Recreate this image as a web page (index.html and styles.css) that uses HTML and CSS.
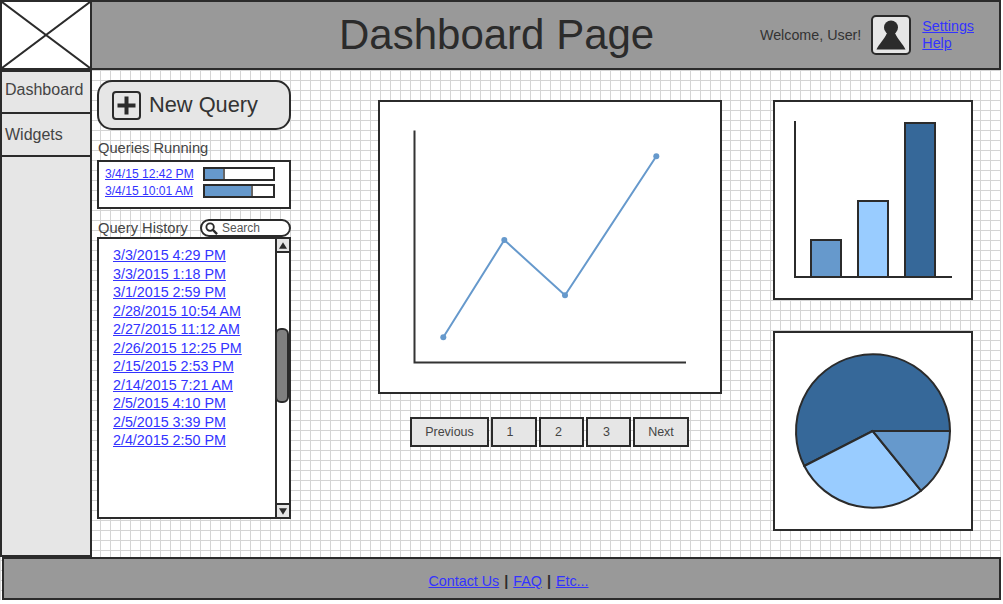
FILE: index.html
```html
<!DOCTYPE html>
<html lang="en">
<head>
    <meta charset="UTF-8">
    <title>Dashboard Page</title>
    <link rel="stylesheet" href="styles.css">
</head>
<body>
    <div class="page">
        <header class="top">
            <div class="logo">
                <svg width="88" height="66" viewBox="0 0 88 66">
                    <path d="M0 0L88 66M88 0L0 66" stroke="#2b2b2b" stroke-width="2" fill="none"/>
                </svg>
            </div>
            <h1 class="title">Dashboard Page</h1>
            <div class="user">
                <span class="welcome">Welcome, User!</span>
                <div class="avatar">
                    <svg width="36" height="36" viewBox="0 0 36 36">
                        <circle cx="18" cy="10.500" r="7" fill="#2b2b2b"/>
                        <path d="M3.500 32.500C6 27 11 23 14 16h8c3 7 8 11 10.500 16.500z" fill="#2b2b2b"/>
                    </svg>
                </div>
                <div class="user-links">
                    <a href="#">Settings</a>
                    <a href="#">Help</a>
                </div>
            </div>
        </header>

        <main class="content">
            <nav class="side">
                <a class="side-item side-first" href="#">Dashboard</a>
                <a class="side-item side-second" href="#">Widgets</a>
                <div class="side-rest"></div>
            </nav>

            <section class="queries">
                <button class="new-query">
                    <svg width="29" height="29" viewBox="0 0 29 29">
                        <rect x="1" y="1" width="27" height="27" rx="3" fill="none" stroke="#2b2b2b" stroke-width="2"/>
                        <path d="M14.500 5.500v18M5.500 14.500h18" stroke="#2b2b2b" stroke-width="4" fill="none"/>
                    </svg>
                    New Query
                </button>

                <h2 class="label running-label">Queries Running</h2>
                <div class="running">
                    <a href="#">3/4/15 12:42 PM</a>
                    <div class="bar"><div class="bar-fill" style="width: 30%"></div></div>
                    <a href="#">3/4/15 10:01 AM</a>
                    <div class="bar"><div class="bar-fill" style="width: 71%"></div></div>
                </div>

                <div class="history-head">
                    <h2 class="label">Query History</h2>
                    <div class="search">
                        <svg width="13" height="13" viewBox="0 0 14 14">
                            <circle cx="5.500" cy="5.500" r="4" fill="none" stroke="#2b2b2b" stroke-width="2"/>
                            <path d="M8.500 8.500L13 13" stroke="#2b2b2b" stroke-width="2.500"/>
                        </svg>
                        <span>Search</span>
                    </div>
                </div>
                <div class="history">
                    <ul class="history-list">
                        <li><a href="#">3/3/2015 4:29 PM</a></li>
                        <li><a href="#">3/3/2015 1:18 PM</a></li>
                        <li><a href="#">3/1/2015 2:59 PM</a></li>
                        <li><a href="#">2/28/2015 10:54 AM</a></li>
                        <li><a href="#">2/27/2015 11:12 AM</a></li>
                        <li><a href="#">2/26/2015 12:25 PM</a></li>
                        <li><a href="#">2/15/2015 2:53 PM</a></li>
                        <li><a href="#">2/14/2015 7:21 AM</a></li>
                        <li><a href="#">2/5/2015 4:10 PM</a></li>
                        <li><a href="#">2/5/2015 3:39 PM</a></li>
                        <li><a href="#">2/4/2015 2:50 PM</a></li>
                    </ul>
                    <div class="scroll">
                        <div class="scroll-btn scroll-up">
                            <svg width="8" height="7" viewBox="0 0 10 8"><path d="M5 0L10 8H0z" fill="#2b2b2b"/></svg>
                        </div>
                        <div class="scroll-thumb"></div>
                        <div class="scroll-btn scroll-down">
                            <svg width="8" height="7" viewBox="0 0 10 8"><path d="M0 0H10L5 8z" fill="#2b2b2b"/></svg>
                        </div>
                    </div>
                </div>
            </section>

            <section class="center">
                <div class="card line-card">
                    <svg width="340" height="290" viewBox="0 0 340 290">
                        <path d="M34.500 28.500V260.500H306" fill="none" stroke="#333" stroke-width="2"/>
                        <path d="M63.300 235.300L124.300 138L185 193.300L276.300 54.300" fill="none" stroke="#6699cc" stroke-width="2"/>
                        <circle cx="63.300" cy="235.300" r="3" fill="#6699cc"/>
                        <circle cx="124.300" cy="138" r="3" fill="#6699cc"/>
                        <circle cx="185" cy="193.300" r="3" fill="#6699cc"/>
                        <circle cx="276.300" cy="54.300" r="3" fill="#6699cc"/>
                    </svg>
                </div>
                <div class="pager">
                    <a class="page-btn prev" href="#">Previous</a>
                    <a class="page-btn one" href="#">1</a>
                    <a class="page-btn two" href="#">2</a>
                    <a class="page-btn three" href="#">3</a>
                    <a class="page-btn next" href="#">Next</a>
                </div>
            </section>

            <section class="right">
                <div class="card small-card">
                    <svg width="196" height="196" viewBox="0 0 196 196">
                        <path d="M20 19V175H177" fill="none" stroke="#2b2b2b" stroke-width="2"/>
                        <rect x="36" y="138" width="30" height="37" fill="#6699cc" stroke="#2b2b2b" stroke-width="2"/>
                        <rect x="83" y="99" width="30" height="76" fill="#99ccff" stroke="#2b2b2b" stroke-width="2"/>
                        <rect x="130" y="21" width="30" height="154" fill="#366899" stroke="#2b2b2b" stroke-width="2"/>
                    </svg>
                </div>
                <div class="card small-card pie-card">
                    <svg width="196" height="196" viewBox="0 0 196 196">
                        <path d="M97.700 98H175A77 77 0 1 0 29.300 133z" fill="#366899" stroke="#2b2b2b" stroke-width="2"/>
                        <path d="M97.700 98L29.300 133A77 77 0 0 0 146 157.700z" fill="#99ccff" stroke="#2b2b2b" stroke-width="2"/>
                        <path d="M97.700 98L146 157.700A77 77 0 0 0 175 98z" fill="#6699cc" stroke="#2b2b2b" stroke-width="2"/>
                    </svg>
                </div>
            </section>
        </main>

        <footer class="bottom">
            <a href="#">Contact Us</a>
            <span class="sep">|</span>
            <a href="#">FAQ</a>
            <span class="sep">|</span>
            <a href="#">Etc...</a>
        </footer>
    </div>
</body>
</html>
```

FILE: styles.css
```css
* {
    box-sizing: border-box;
}

body {
    margin: 0;
    background-color: #fff;
    font-family: "Liberation Sans", Arial, sans-serif;
    color: #333;
}

a {
    color: #3333ff;
}

svg {
    display: block;
}

.page {
    width: 1001px;
    height: 600px;
    display: flex;
    flex-direction: column;
    background-image:
        linear-gradient(#d4d4d4 1px, transparent 1px),
        linear-gradient(90deg, #d4d4d4 1px, transparent 1px);
    background-size: 10px 10px;
}

/* header */
.top {
    height: 70px;
    flex: none;
    display: flex;
    align-items: center;
    background-color: #999;
    border: 2px solid #2b2b2b;
    border-left: none;
}

.logo {
    width: 92px;
    height: 66px;
    background-color: #fff;
    border-left: 2px solid #2b2b2b;
    border-right: 2px solid #2b2b2b;
}

.title {
    margin: 0 0 0 247px;
    font-size: 42px;
    font-weight: normal;
    color: #2b2b2b;
}

.user {
    margin-left: auto;
    padding-right: 25px;
    display: flex;
    align-items: center;
}

.welcome {
    font-size: 14.300px;
    color: #333;
}

.avatar {
    width: 40px;
    height: 40px;
    margin-left: 10px;
    background-color: #e6e6e6;
    border: 2px solid #2b2b2b;
    border-radius: 5px;
}

.user-links {
    margin-left: 11px;
    display: flex;
    flex-direction: column;
    font-size: 14.300px;
    line-height: 17px;
}

/* main area */
.content {
    flex: 1;
    min-height: 0;
    display: flex;
}

.side {
    width: 92px;
    flex: none;
    display: flex;
    flex-direction: column;
}

.side-item {
    background-color: #e6e6e6;
    border: 2px solid #2b2b2b;
    border-top: none;
    padding-left: 3px;
    font-size: 16px;
    line-height: 18px;
    color: #444;
    text-decoration: none;
}

.side-first {
    height: 44px;
    padding-top: 9px;
    border-top: 2px solid #2b2b2b;
}

.side-second {
    height: 43px;
    padding-top: 12px;
}

.side-rest {
    flex: 1;
    background-color: #e6e6e6;
    border: 2px solid #2b2b2b;
    border-top: none;
}

.queries {
    width: 194px;
    flex: none;
    margin-left: 5px;
    padding-top: 10px;
}

.new-query {
    width: 194px;
    height: 50px;
    padding: 0 0 0 13px;
    display: flex;
    align-items: center;
    gap: 8px;
    background-color: #e6e6e6;
    border: 2px solid #2b2b2b;
    border-radius: 15px;
    font-family: inherit;
    font-size: 21.800px;
    color: #333;
}

.label {
    margin: 0 0 0 1px;
    font-size: 14.700px;
    font-weight: normal;
    line-height: 18px;
    color: #444;
}

.running-label {
    margin-top: 9px;
    margin-bottom: 3px;
}

.running {
    height: 49px;
    padding: 5px 0 0 6px;
    display: grid;
    grid-template-columns: 98px 72px;
    grid-auto-rows: 14px;
    row-gap: 3px;
    background-color: #fff;
    border: 2px solid #2b2b2b;
    font-size: 12.100px;
    line-height: 14px;
}

.bar {
    background-color: #fff;
    border: 2px solid #2b2b2b;
}

.bar-fill {
    height: 100%;
    background-color: #6699cc;
    border-right: 2px solid #666;
}

.history-head {
    margin-top: 10px;
    display: flex;
    align-items: center;
    justify-content: space-between;
}

.search {
    width: 91px;
    height: 18px;
    padding-left: 3px;
    display: flex;
    align-items: center;
    gap: 4px;
    background-color: #fff;
    border: 2px solid #2b2b2b;
    border-radius: 9px;
    font-size: 12px;
    color: #555;
}

.history {
    height: 282px;
    display: flex;
    background-color: #fff;
    border: 2px solid #2b2b2b;
}

.history-list {
    flex: 1;
    margin: 0;
    padding: 7px 0 0 14px;
    list-style: none;
    font-size: 14.300px;
    line-height: 18.500px;
}

.scroll {
    width: 14px;
    flex: none;
    display: flex;
    flex-direction: column;
    border-left: 2px solid #2b2b2b;
}

.scroll-btn {
    height: 14px;
    display: flex;
    align-items: center;
    justify-content: center;
    background-color: #e6e6e6;
}

.scroll-up {
    border-bottom: 2px solid #2b2b2b;
}

.scroll-down {
    margin-top: auto;
    border-top: 2px solid #2b2b2b;
}

.scroll-thumb {
    height: 75px;
    margin: 75px 0 0 -2px;
    background-color: #808080;
    border: 2px solid #2b2b2b;
    border-radius: 6px;
}

.center {
    width: 344px;
    flex: none;
    margin-left: 87px;
    padding-top: 30px;
}

.card {
    background-color: #fff;
    border: 2px solid #2b2b2b;
}

.line-card {
    height: 294px;
}

.pager {
    margin: 23px 0 0 32px;
    display: flex;
    gap: 2px;
}

.page-btn {
    width: 45px;
    height: 30px;
    display: flex;
    align-items: center;
    justify-content: center;
    background-color: #e6e6e6;
    border: 2px solid #2b2b2b;
    font-size: 12.500px;
    color: #444;
    text-decoration: none;
}

.prev {
    width: 79px;
}

.one {
    width: 46px;
    padding-right: 8px;
}

.two {
    padding-right: 6px;
}

.three {
    padding-right: 4px;
}

.next {
    width: 56px;
}

.right {
    width: 200px;
    flex: none;
    margin-left: 51px;
    padding-top: 30px;
}

.small-card {
    width: 200px;
    height: 200px;
}

.pie-card {
    margin-top: 31px;
}

/* footer */
.bottom {
    height: 43px;
    flex: none;
    margin-left: 2px;
    padding: 5px 0 0 14px;
    display: flex;
    align-items: center;
    justify-content: center;
    gap: 5px;
    background-color: #999;
    border: 2px solid #2b2b2b;
    font-size: 14.300px;
}

.sep {
    font-weight: bold;
    color: #2b2b2b;
}
```
